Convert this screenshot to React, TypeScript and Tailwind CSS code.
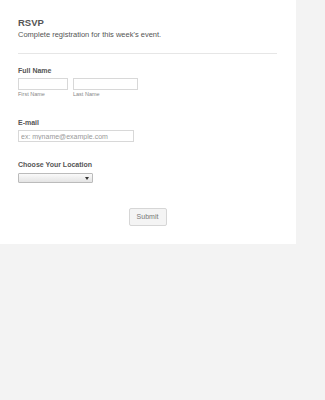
export default function App() {
  return (
    <div className="min-h-[400px] w-[325px] bg-[#f3f3f3] font-['Liberation_Sans',Arial,sans-serif]">
      <div className="w-[296px] h-[244px] bg-white px-[18px] pt-[17px]">
        <div className="pr-[1px]">
          <h1 className="text-[9.5px] leading-[12px] font-bold text-[#555]">RSVP</h1>
          <p className="mt-[1px] text-[7.5px] leading-[10px] text-[#555]">Complete registration for this week's event.</p>
          <div className="mt-[13px] h-px bg-[#e6e6e6]" />
        </div>

        <div className="mt-[12px]">
          <label className="block text-[7px] leading-[9px] font-bold text-[#555]">Full Name</label>
          <div className="mt-[3px] flex gap-[5px]">
            <div className="flex flex-col">
              <input className="block w-[50px] h-[12px] border border-[#d8d8d8] bg-white outline-none" />
              <span className="mt-[1px] text-[5.5px] leading-[7px] text-[#888]">First Name</span>
            </div>
            <div className="flex flex-col">
              <input className="block w-[65px] h-[12px] border border-[#d8d8d8] bg-white outline-none" />
              <span className="mt-[1px] text-[5.5px] leading-[7px] text-[#888]">Last Name</span>
            </div>
          </div>
        </div>

        <div className="mt-[20px]">
          <label className="block text-[7px] leading-[9px] font-bold text-[#555]">E-mail</label>
          <input
            placeholder="ex: myname@example.com"
            className="block mt-[3px] w-[116px] h-[12px] border border-[#d8d8d8] bg-white px-[2px] text-[7px] leading-[10px] text-[#777] placeholder:text-[#999] outline-none"
          />
        </div>

        <div className="mt-[18px]">
          <label className="block text-[7px] leading-[9px] font-bold text-[#555]">Choose Your Location</label>
          <div className="mt-[4px] flex w-[75px] h-[10px] items-center justify-end border border-[#bbb] rounded-[1px] bg-gradient-to-b from-[#fafafa] to-[#e4e4e4] pr-[3px]">
            <svg width="4" height="3" viewBox="0 0 4 3"><path d="M0 0h4L2 3z" fill="#333" /></svg>
          </div>
        </div>

        <div className="mt-[25px] flex justify-center pr-[1px]">
          <button className="block w-[38px] h-[18px] rounded-[2px] border border-[#d6d6d6] bg-[#f4f4f4] text-[7px] leading-[10px] text-[#777]">Submit</button>
        </div>
      </div>
    </div>
  );
}
